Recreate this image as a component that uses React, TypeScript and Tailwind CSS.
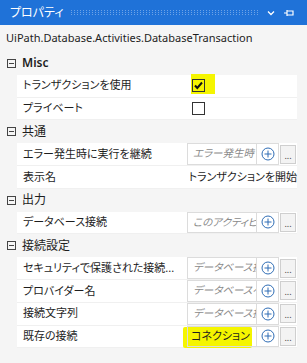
import React from "react";

function PlusCircle() {
  return (
    <svg width="14" height="14" viewBox="0 0 14 14">
      <circle cx="7" cy="7" r="6" fill="none" stroke="#2f6db5" strokeWidth="1" />
      <path d="M7 3.5V10.5M3.5 7H10.5" stroke="#2f6db5" strokeWidth="1" />
    </svg>
  );
}

function Minus() {
  return (
    <svg width="9" height="9" viewBox="0 0 9 9" className="shrink-0">
      <rect x="0.5" y="0.5" width="8" height="8" fill="none" stroke="#444" strokeWidth="1" />
      <path d="M2 4.5H7" stroke="#444" strokeWidth="1" />
    </svg>
  );
}

function Section({ title }: { title: string }) {
  return (
    <div className="flex h-[22.8px] items-center pl-[7px] gap-[6px] text-[12px] text-[#1e1e1e]">
      <Minus />
      <span className={title === "Misc" ? "font-semibold" : ""}>{title}</span>
    </div>
  );
}

function Row({ label, children }: { label: string; children?: React.ReactNode }) {
  return (
    <div className="flex h-[22.8px] pl-[17px] pr-[10px]">
      <div className="flex w-[170px] items-center bg-white pl-[6px] text-[11px] text-[#1e1e1e] border-b border-[#f0f0f0] overflow-hidden whitespace-nowrap">
        {label}
      </div>
      <div className="flex flex-1 items-center bg-white border-b border-[#f0f0f0] relative">{children}</div>
    </div>
  );
}

function InputCell({ text, highlight }: { text: string; highlight?: boolean }) {
  return (
    <div className="relative flex h-full items-center w-full">
      {highlight && <div className="absolute left-[-4px] top-[1px] h-[21px] w-[69px] rounded-[2px] bg-[#f5f500]" />}
      <div className="relative flex h-full w-[70px] items-center border border-[#dcdcdc] overflow-hidden whitespace-nowrap">
        {highlight ? (
          <span className="pl-[3px] text-[11px] text-[#1e1e1e]">{text}</span>
        ) : (
          <span className="pl-[5px] text-[10.5px] italic text-[#8a8a8a]">{text}</span>
        )}
      </div>
      <div className="flex h-full w-[22px] items-center justify-center border-y border-r border-[#dcdcdc]">
        <PlusCircle />
      </div>
      <div className="ml-[1px] flex h-[19px] w-[16px] items-end justify-center border border-[#cfcfcf] bg-[#f3f3f3] pb-[3px] text-[9px] leading-none text-[#444]">
        ...
      </div>
    </div>
  );
}

function CheckBox({ checked, highlight }: { checked?: boolean; highlight?: boolean }) {
  return (
    <div className="relative ml-[5px] h-[13px] w-[13px]">
      {highlight && <div className="absolute left-[-1px] top-[-5px] h-[20px] w-[24px] bg-[#f5f500]" />}
      <div className="absolute inset-0 border border-[#333]">
        {checked && (
          <svg width="11" height="11" viewBox="0 0 11 11" className="absolute left-0 top-0">
            <path d="M2 5.5L4.3 8L9 2.5" fill="none" stroke="#111" strokeWidth="2" />
          </svg>
        )}
      </div>
    </div>
  );
}

function Dots() {
  return (
    <svg className="ml-[7px] h-[5px] flex-1" height="5">
      <defs>
        <pattern id="dots" width="3" height="2" patternUnits="userSpaceOnUse">
          <rect x="0" y="0" width="1" height="1" fill="rgba(255,255,255,0.35)" />
        </pattern>
      </defs>
      <rect x="0" y="0" width="100%" height="5" fill="url(#dots)" />
    </svg>
  );
}

export default function App() {
  return (
    <div className="relative h-[363px] w-[307px] overflow-hidden bg-[#f5f5f5] font-['Noto_Sans','Noto_Sans_CJK_JP',sans-serif] [font-feature-settings:'palt']">
      <div className="flex h-[25px] items-center bg-[#1f72d8] pl-[10px] pr-[12px]">
        <span className="text-[12px] text-white whitespace-nowrap">プロパティ</span>
        <Dots />
        <svg width="10" height="10" viewBox="0 0 10 10" className="ml-[8px]">
          <path d="M2 3.5L5 6.5L8 3.5" fill="none" stroke="white" strokeWidth="1.3" />
        </svg>
        <svg width="12" height="10" viewBox="0 0 12 10" className="ml-[7px]">
          <path d="M1 5H4M4 2V8M4 3H10V7H4" fill="none" stroke="white" strokeWidth="1.2" />
        </svg>
      </div>
      <div className="flex h-[27px] items-center pl-[6px] text-[11px] text-[#1e1e1e] whitespace-nowrap">
        UiPath.Database.Activities.DatabaseTransaction
      </div>
      <Section title="Misc" />
      <Row label="トランザクションを使用">
        <CheckBox checked highlight />
      </Row>
      <Row label="プライベート">
        <CheckBox />
      </Row>
      <Section title="共通" />
      <Row label="エラー発生時に実行を継続">
        <InputCell text="エラー発生時" />
      </Row>
      <Row label="表示名">
        <span className="pl-[3px] text-[11px] text-[#1e1e1e] whitespace-nowrap">トランザクションを開始</span>
      </Row>
      <Section title="出力" />
      <Row label="データベース接続">
        <InputCell text="このアクティビ" />
      </Row>
      <Section title="接続設定" />
      <Row label="セキュリティで保護された接続...">
        <InputCell text="データベース接" />
      </Row>
      <Row label="プロバイダー名">
        <InputCell text="データベースへ" />
      </Row>
      <Row label="接続文字列">
        <InputCell text="データベース接" />
      </Row>
      <Row label="既存の接続">
        <InputCell text="コネクション" highlight />
      </Row>
    </div>
  );
}
